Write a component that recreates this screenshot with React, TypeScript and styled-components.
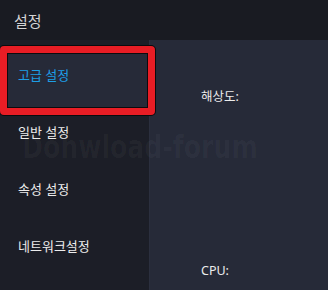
import React from "react";
import styled, { createGlobalStyle } from "styled-components";

const GlobalStyle = createGlobalStyle`
  html, body {
    margin: 0;
    padding: 0;
    background: #1c1e27;
  }
  * {
    box-sizing: border-box;
  }
`;

const Window = styled.div`
  position: relative;
  width: 328px;
  height: 290px;
  overflow: hidden;
  font-family: "Noto Sans", "Noto Sans CJK KR", sans-serif;
  background: #1c1e27;
`;

const Header = styled.div`
  height: 40px;
  display: flex;
  align-items: center;
  padding-left: 14px;
  background: #191b22;
  color: #d4d4d4;
  font-size: 15px;
`;

const Body = styled.div`
  display: flex;
  height: 250px;
`;

const Sidebar = styled.div`
  width: 149px;
  display: flex;
  flex-direction: column;
  padding-top: 6px;
  background: #1c1e27;
`;

const MenuItem = styled.div<{ $active?: boolean }>`
  position: relative;
  height: 57px;
  display: flex;
  align-items: center;
  padding-left: 18px;
  font-size: 13px;
  color: ${(p) => (p.$active ? "#1d9ee6" : "#ececec")};
  z-index: ${(p) => (p.$active ? 2 : 1)};
`;

const Label = styled.span`
  position: relative;
  z-index: 1;
`;

// 빨간 강조 표시 (스크린샷 주석)
const Highlight = styled.div`
  position: absolute;
  top: 0;
  left: 0;
  width: 155px;
  height: 69px;
  background: #262a38;
  border: 7px solid #e81d25;
  border-radius: 4px;
  box-shadow: 0 0 0 1px #0b0b0e, inset 0 0 0 1px #0b0b0e;
`;

const Panel = styled.div`
  flex: 1;
  display: flex;
  flex-direction: column;
  padding: 47px 0 0 51px;
  background: #262a38;
  border-left: 1px solid #2b2f3e;
`;

const Field = styled.div<{ $gap?: number }>`
  height: 20px;
  line-height: 20px;
  font-size: 12.5px;
  color: #ececec;
  margin-top: ${(p) => p.$gap ?? 0}px;
`;

const Watermark = styled.div`
  position: absolute;
  left: 22px;
  top: 132px;
  font-family: "DejaVu Sans Condensed", "DejaVu Sans", sans-serif;
  font-weight: 700;
  font-size: 28px;
  line-height: 28px;
  transform: scaleY(1.15);
  transform-origin: left top;
  color: rgba(255, 255, 255, 0.035);
  pointer-events: none;
  z-index: 3;
`;

const menus = ["고급 설정", "일반 설정", "속성 설정", "네트워크설정"];

export default function App() {
  return (
    <>
      <GlobalStyle />
      <Window>
        <Header>설정</Header>
        <Body>
          <Sidebar>
            {menus.map((m, i) => (
              <MenuItem key={m} $active={i === 0}>
                {i === 0 && <Highlight />}
                <Label>{m}</Label>
              </MenuItem>
            ))}
          </Sidebar>
          <Panel>
            <Field>해상도:</Field>
            <Field $gap={154}>CPU:</Field>
          </Panel>
        </Body>
        <Watermark>Donwload-forum</Watermark>
      </Window>
    </>
  );
}
